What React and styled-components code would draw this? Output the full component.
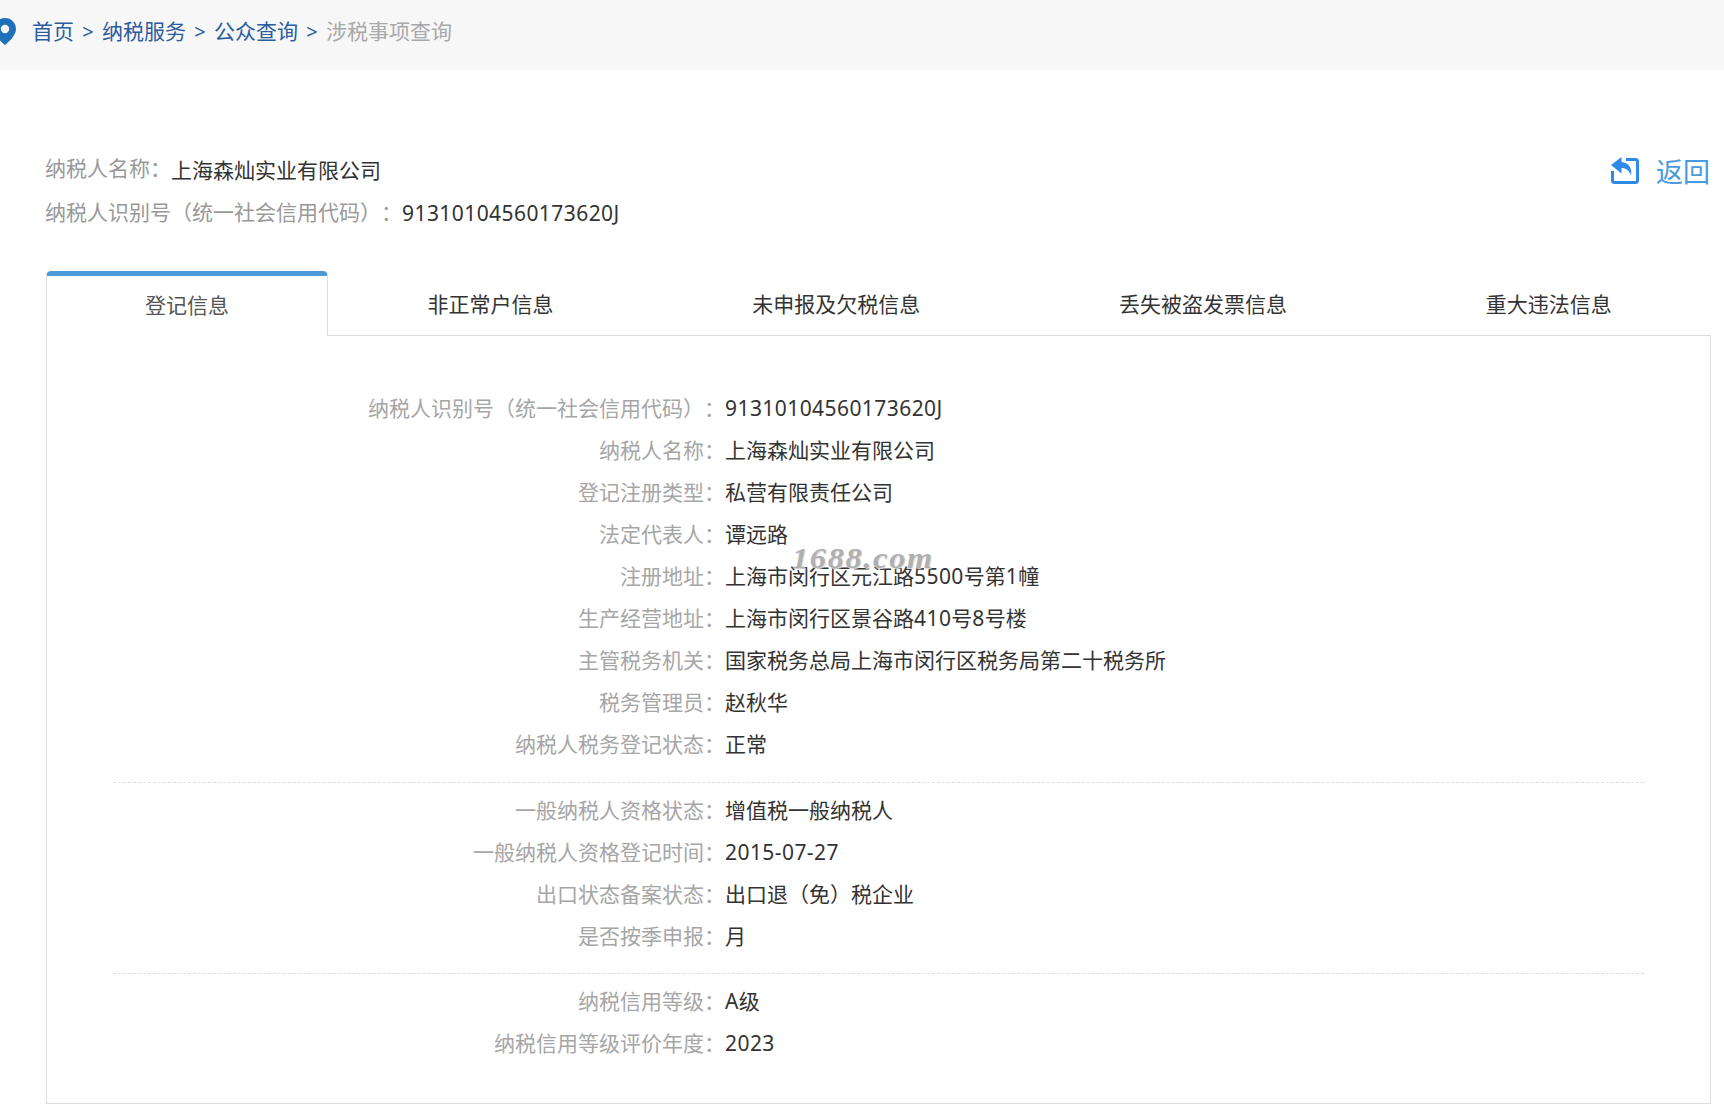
import React from 'react';
import styled, { createGlobalStyle } from 'styled-components';

const GlobalStyle = createGlobalStyle`
  html, body {
    margin: 0;
    padding: 0;
    background: #fff;
  }
  body {
    font-family: "Noto Sans", "Noto Sans CJK SC", sans-serif;
    font-size: 21px;
    color: #333;
    overflow: hidden;
    text-spacing-trim: space-all;
  }
`;

const Crumbs = styled.nav`
  box-sizing: border-box;
  display: flex;
  align-items: center;
  height: 70px;
  padding-bottom: 8px;
  background: #f7f7f7;
  overflow: hidden;
`;

const Pin = styled.svg`
  flex: none;
  width: 22px;
  height: 27px;
  margin-left: -6px;
  margin-right: 16px;
`;

const Crumb = styled.a`
  color: ${p => (p.$current ? '#a9a9a9' : '#2a5c9e')};
  line-height: 1;
`;

const Sep = styled.span`
  width: 28px;
  text-align: center;
  color: #2a5c9e;
  font-size: 20px;
`;

const Head = styled.section`
  display: flex;
  justify-content: space-between;
  align-items: center;
  margin-top: 77px;
  padding: 0 14px 0 45px;
`;

const HeadRow = styled.div`
  display: flex;
  align-items: center;
  height: 44px;
`;

const HeadLabel = styled.span`
  color: #999;
  padding-bottom: 4px;
`;

const HeadValue = styled.span`
  color: #333;
`;

const BackLink = styled.a`
  display: flex;
  align-items: center;
  gap: 17px;
  color: #4a9ae0;
  font-size: 27px;
  line-height: 1;
  margin-bottom: 40px;
`;

const BackIcon = styled.svg`
  width: 28px;
  height: 28px;
`;

const Tabs = styled.div`
  display: flex;
  margin: 36px 13px 0 46px;
  height: 64px;
  border-bottom: 1px solid #ddd;
`;

const Tab = styled.div`
  box-sizing: border-box;
  flex: none;
  display: flex;
  align-items: center;
  justify-content: center;
  padding: 0 99.4px;
  white-space: nowrap;
  color: ${p => (p.$active ? '#555' : '#333')};
  ${p => p.$active && `
    height: 65px;
    width: 282px;
    padding: 0 0 5px;
    background: #fff;
    border: 1px solid #ddd;
    border-top: 5px solid #4c9ad8;
    border-bottom: 0;
    border-radius: 5px 5px 0 0;
  `}
`;

const Panel = styled.div`
  position: relative;
  margin: 0 13px 0 46px;
  padding: 51px 66px 39px;
  border: 1px solid #ddd;
  border-top: 0;
`;

const Group = styled.div`
  padding-bottom: ${p => p.$pad}px;
  margin-bottom: 6px;
  border-bottom: 1px dashed #ddd;

  &:last-of-type {
    padding-bottom: 0;
    margin-bottom: 0;
    border-bottom: 0;
  }
`;

const Row = styled.div`
  display: grid;
  grid-template-columns: 612px 1fr;
  height: 42px;
  line-height: 42px;
`;

const Label = styled.span`
  color: #a6a6a6;
  text-align: right;
  white-space: nowrap;
`;

const Value = styled.span`
  color: #333;
  white-space: nowrap;
`;

const Latin = styled.span`
  letter-spacing: 0.43px;
`;

const Watermark = styled.span`
  position: absolute;
  left: 745px;
  top: 207px;
  font-family: "Liberation Serif", serif;
  font-size: 29px;
  font-weight: 700;
  font-style: italic;
  letter-spacing: 1.5px;
  line-height: 30px;
  color: #b0b0b0;
  text-shadow: 1px 1px 1px #dcdcdc;
  transform: scaleX(1.115);
  transform-origin: left center;
`;

const crumbs = ['首页', '纳税服务', '公众查询'];

const tabs = ['登记信息', '非正常户信息', '未申报及欠税信息', '丢失被盗发票信息', '重大违法信息'];

const groups = [
  {
    pad: 17,
    rows: [
      ['纳税人识别号（统一社会信用代码）：', '91310104560173620J'],
      ['纳税人名称：', '上海森灿实业有限公司'],
      ['登记注册类型：', '私营有限责任公司'],
      ['法定代表人：', '谭远路'],
      ['注册地址：', '上海市闵行区元江路5500号第1幢'],
      ['生产经营地址：', '上海市闵行区景谷路410号8号楼'],
      ['主管税务机关：', '国家税务总局上海市闵行区税务局第二十税务所'],
      ['税务管理员：', '赵秋华'],
      ['纳税人税务登记状态：', '正常'],
    ],
  },
  {
    pad: 16,
    rows: [
      ['一般纳税人资格状态：', '增值税一般纳税人'],
      ['一般纳税人资格登记时间：', '2015-07-27'],
      ['出口状态备案状态：', '出口退（免）税企业'],
      ['是否按季申报：', '月'],
    ],
  },
  {
    pad: 0,
    rows: [
      ['纳税信用等级：', 'A级'],
      ['纳税信用等级评价年度：', '2023'],
    ],
  },
];

// digits and letters run a bit wider than the CJK around them
function spaced(text) {
  return text.split(/([0-9A-Za-z-]+)/).map((part, i) =>
    i % 2 ? <Latin key={i}>{part}</Latin> : part
  );
}

export default function App() {
  return (
    <>
      <GlobalStyle />
      <Crumbs>
        <Pin viewBox="0 0 22 27">
          <path
            fill="#1f70b8"
            fillRule="evenodd"
            d="M11 0C4.900 0 0 4.800 0 10.800 0 17.500 6.500 23.400 11 27c4.500-3.600 11-9.500 11-16.200C22 4.800 17.100 0 11 0zm0 6.800a4.200 4.200 0 1 1 0 8.400 4.200 4.200 0 0 1 0-8.400z"
          />
        </Pin>
        {crumbs.map(c => (
          <React.Fragment key={c}>
            <Crumb>{c}</Crumb>
            <Sep>&gt;</Sep>
          </React.Fragment>
        ))}
        <Crumb $current>涉税事项查询</Crumb>
      </Crumbs>

      <Head>
        <div>
          <HeadRow>
            <HeadLabel>纳税人名称：</HeadLabel>
            <HeadValue>上海森灿实业有限公司</HeadValue>
          </HeadRow>
          <HeadRow>
            <HeadLabel>纳税人识别号（统一社会信用代码）：</HeadLabel>
            <HeadValue>{spaced('91310104560173620J')}</HeadValue>
          </HeadRow>
        </div>
        <BackLink>
          <BackIcon viewBox="0 0 28 28">
            <path
              fill="none"
              stroke="#2e8ae6"
              strokeWidth="3"
              d="M15 2.500h9.500a2 2 0 0 1 2 2v19a2 2 0 0 1-2 2h-21a2 2 0 0 1-2-2V14"
            />
            <path
              fill="#2e8ae6"
              d="M10.500 0 0 8l10.500 8.500v-5.500c4.500 0 7.500 2 9.500 7.500 1.500-7.500-2.500-13-9.500-13.500z"
            />
          </BackIcon>
          返回
        </BackLink>
      </Head>

      <Tabs>
        {tabs.map((t, i) => (
          <Tab key={t} $active={i === 0}>{t}</Tab>
        ))}
      </Tabs>

      <Panel>
        <Watermark>1688.com</Watermark>
        {groups.map(g => (
          <Group key={g.rows[0][0]} $pad={g.pad}>
            {g.rows.map(([k, v]) => (
              <Row key={k}>
                <Label>{k}</Label>
                <Value>{spaced(v)}</Value>
              </Row>
            ))}
          </Group>
        ))}
      </Panel>
    </>
  );
}
